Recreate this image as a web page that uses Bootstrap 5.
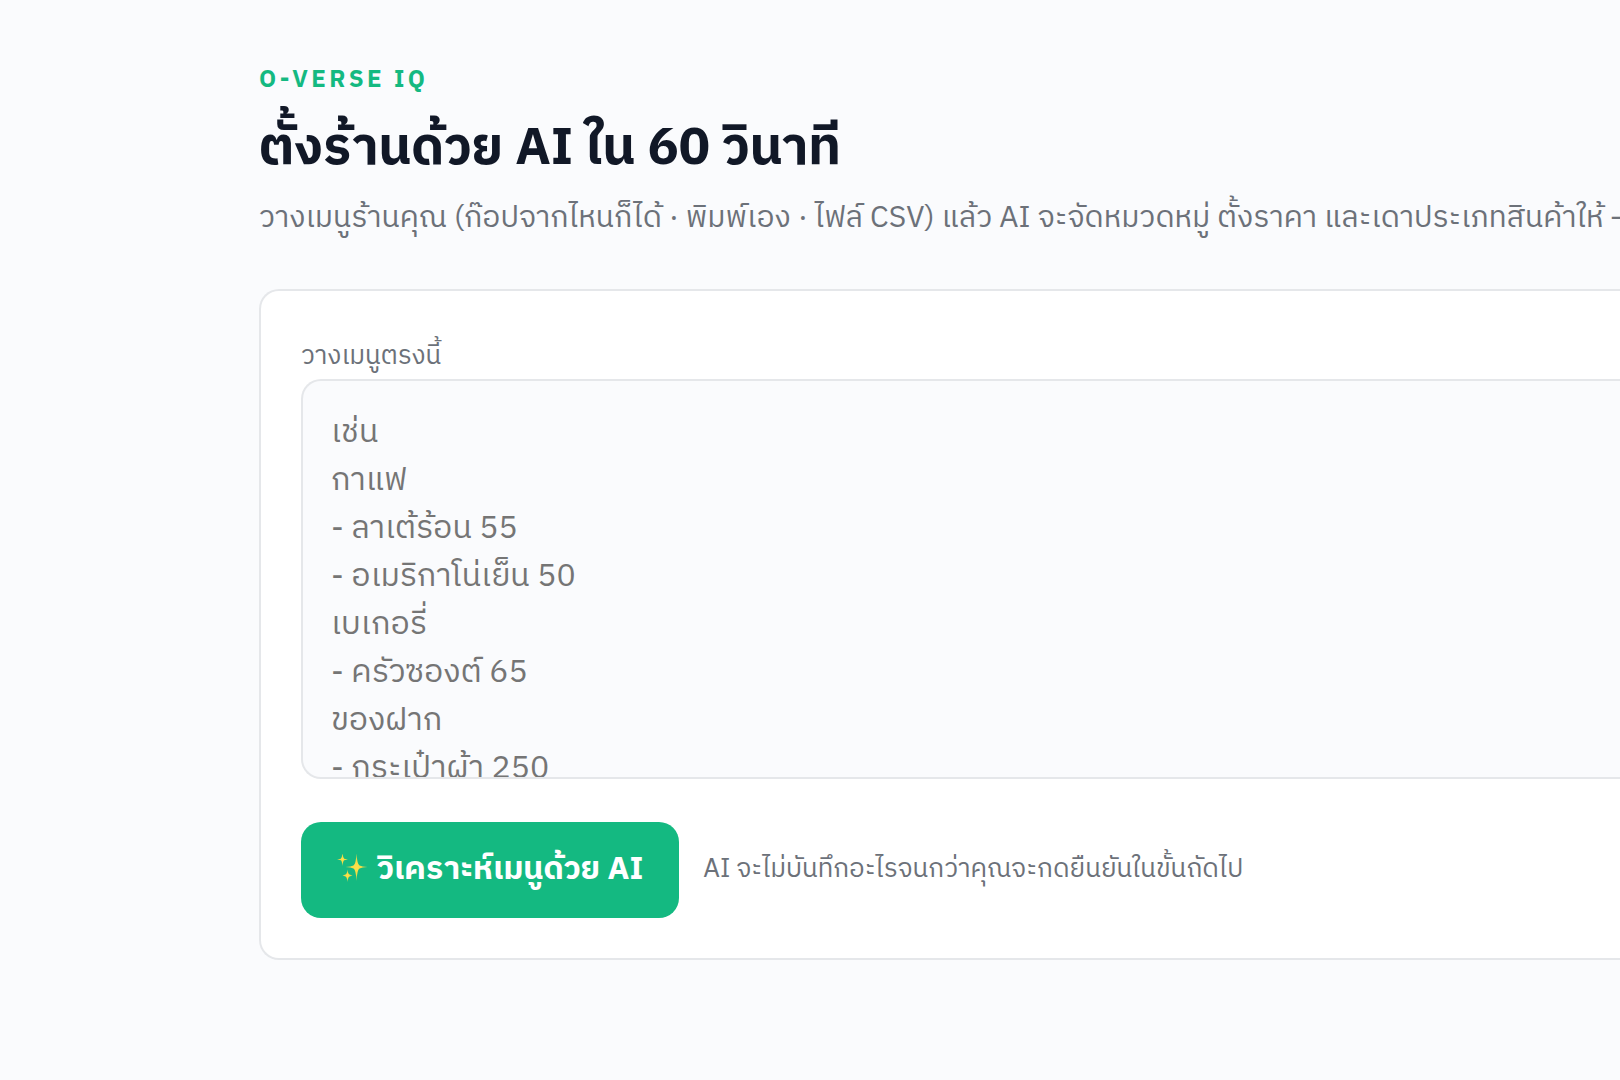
<!DOCTYPE html>
<html lang="th">
<head>
<meta charset="utf-8">
<meta name="viewport" content="width=device-width, initial-scale=1">
<title>O-VERSE IQ</title>
<link href="https://cdn.jsdelivr.net/npm/bootstrap@5.3.0/dist/css/bootstrap.min.css" rel="stylesheet">
<style>
body{background:#fafbfd;color:#111827;font-family:"IBM Plex Sans Thai","Noto Sans Thai","Noto Sans",sans-serif}
.page-shell{padding:62px 0 60px 259px}
.brand-line{color:#14b981;font-size:24px;line-height:36px;letter-spacing:.14em}
.page-title{font-size:52px;line-height:78px;margin-top:12px}
.page-intro{color:#6c7179;font-size:30px;line-height:45px}
.menu-panel{background:#fff;border:2px solid #e5e7ea;border-radius:20px 0 0 20px;padding:40px 0 40px 40px}
.field-label,.hint-text{color:#6c7179;font-size:26px;line-height:44px}
.menu-input{height:400px;background:#fafbfd;border:2px solid #e5e7ea;border-radius:20px 0 0 20px;padding:28px 28px 0;font-size:32px;line-height:48px;resize:none;overflow:hidden}
.menu-input::placeholder{color:#757575}
.action-row{margin-top:43px}
.analyse-btn{--bs-btn-color:#fff;--bs-btn-bg:#14b981;--bs-btn-hover-color:#fff;--bs-btn-hover-bg:#0fa573;height:96px;padding:0 36px;border:0;border-radius:20px;font-size:32px}
</style>
</head>
<body class="overflow-x-hidden">
<main class="page-shell">
  <header class="text-nowrap mb-5">
    <p class="brand-line fw-bold mb-0">O-VERSE IQ</p>
    <h1 class="page-title fw-bold mb-2">ตั้งร้านด้วย AI ใน 60 วินาที</h1>
    <p class="page-intro mb-0">วางเมนูร้านคุณ (ก๊อปจากไหนก็ได้ · พิมพ์เอง · ไฟล์ CSV) แล้ว AI จะจัดหมวดหมู่ ตั้งราคา และเดาประเภทสินค้าให้ —</p>
  </header>
  <form class="menu-panel border-end-0">
    <label class="field-label d-block pt-1" for="menu">วางเมนูตรงนี้</label>
    <textarea class="menu-input form-control border-end-0" id="menu" placeholder="เช่น
กาแฟ
- ลาเต้ร้อน 55
- อเมริกาโน่เย็น 50
เบเกอรี่
- ครัวซองต์ 65
ของฝาก
- กระเป๋าผ้า 250"></textarea>
    <div class="action-row d-flex align-items-center gap-4">
      <button class="analyse-btn btn fw-bold d-flex align-items-center gap-2" type="button">
        <svg width="32" height="32" viewBox="0 0 32 32" aria-hidden="true">
          <defs><radialGradient id="glow"><stop offset="0" stop-color="#ffe14a"/><stop offset=".45" stop-color="#f3dc45"/><stop offset="1" stop-color="#c9cf55"/></radialGradient></defs>
          <g fill="url(#glow)">
            <path d="M19.5 -1Q20 10 22.5 11.5Q25 12.6 30.5 13Q25 13.4 22.5 14.5Q20 16 19.5 27Q19 16 16.5 14.5Q14 13.4 8.5 13Q14 12.6 16.5 11.5Q19 10 19.5 -1Z"/>
            <path d="M5.5 -1Q6 4 7.2 4.7L11 5.5L7.2 6.3Q6 7 5.5 12Q5 7 3.8 6.3L0 5.5L3.8 4.7Q5 4 5.5 -1Z"/>
            <path d="M10.5 15.500Q11 20 12.500 20.500L15.500 21.500L12.500 22.500Q11 23 10.500 28Q10 23 8.500 22.500L5.500 21.500L8.500 20.500Q10 20 10.500 15.500Z"/>
          </g>
        </svg>
        <span>วิเคราะห์เมนูด้วย AI</span>
      </button>
      <span class="hint-text text-nowrap">AI จะไม่บันทึกอะไรจนกว่าคุณจะกดยืนยันในขั้นถัดไป</span>
    </div>
  </form>
</main>
<script src="https://cdn.jsdelivr.net/npm/bootstrap@5.3.0/dist/js/bootstrap.bundle.min.js"></script>
</body>
</html>
